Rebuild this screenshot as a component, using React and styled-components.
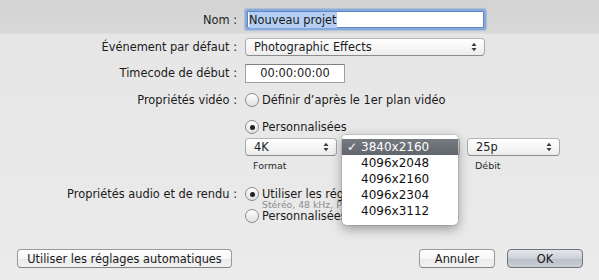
import React from "react";
import styled, { createGlobalStyle, css } from "styled-components";

const Global = createGlobalStyle`
  html, body { margin: 0; padding: 0; }
  body { width: 599px; height: 280px; overflow: hidden; background: #ebebeb; }
`;

const Window = styled.div`
  width: 599px;
  height: 280px;
  box-sizing: border-box;
  padding-top: 8px;
  display: flex;
  flex-direction: column;
  background: linear-gradient(#d3d3d3 0px, #d9d9d9 33px, #e6e6e6 34px, #ebebeb 280px);
  font-family: "DejaVu Sans", "Noto Sans", sans-serif;
  font-size: 11.4px;
  color: #1a1a1a;
`;

const Row = styled.div`
  display: grid;
  grid-template-columns: 237px 1fr;
  column-gap: 8px;
  align-items: ${(p) => p.$align || "center"};
  height: ${(p) => p.$h}px;
  margin-top: ${(p) => p.$mt || 0}px;
`;

const Label = styled.div`
  text-align: right;
  white-space: nowrap;
  line-height: 14px;
`;

const TextField = styled.div`
  box-sizing: border-box;
  width: ${(p) => p.$w}px;
  height: ${(p) => p.$h}px;
  background: #fff;
  border: 1px solid #a0a0a0;
  border-top-color: #808080;
  display: flex;
  align-items: center;
  justify-content: ${(p) => (p.$center ? "center" : "flex-start")};
  padding: 0 1px;
  white-space: nowrap;
  ${(p) =>
    p.$focus &&
    css`
      margin-left: 2px;
      border-color: #5f86c2;
      border-radius: 1px;
      box-shadow: 0 0 0 2px #86a9db, 0 0 1px 3px rgba(100, 145, 210, 0.35);
    `}
`;

const Selection = styled.span`
  background: #b4cff3;
  padding: 1px 0;
`;

const Popup = styled.div`
  box-sizing: border-box;
  width: ${(p) => p.$w}px;
  height: 18px;
  display: flex;
  align-items: center;
  padding: 0 7px 0 8px;
  border: 1px solid #a8a8a8;
  border-top-color: #b5b5b5;
  border-bottom-color: #8c8c8c;
  border-radius: 4px;
  background: linear-gradient(#ffffff, #f6f6f6 55%, #ececec);
  white-space: nowrap;
`;

const PopupText = styled.span`
  flex: 1;
  overflow: hidden;
`;

const Arrows = () => (
  <svg width="6" height="10" viewBox="0 0 6 10">
    <path d="M0.5 4 L3 0.8 L5.5 4 Z" fill="#3a3a3a" />
    <path d="M0.5 6 L3 9.2 L5.5 6 Z" fill="#3a3a3a" />
  </svg>
);

const Radio = styled.label`
  display: flex;
  align-items: center;
  gap: 3px;
  height: 14px;
  white-space: nowrap;
`;

const RadioCircle = styled.span`
  box-sizing: border-box;
  width: 14px;
  height: 14px;
  flex: none;
  border-radius: 50%;
  border: 1px solid #8a8a8a;
  background: linear-gradient(#ffffff, #ececec 60%, #e2e2e2);
  display: inline-flex;
  align-items: center;
  justify-content: center;
  &::after {
    content: "";
    width: 5px;
    height: 5px;
    border-radius: 50%;
    background: #222;
    display: ${(p) => (p.$checked ? "block" : "none")};
  }
`;

const PopupRow = styled.div`
  display: grid;
  grid-template-columns: 92px 116px 93px;
  column-gap: 7px;
  align-items: center;
`;

const Anchor = styled.div`
  position: relative;
`;

const SmallLabel = styled.div`
  font-size: 9.5px;
  color: #2a2a2a;
  padding-left: 8px;
`;

const Menu = styled.div`
  position: absolute;
  left: -2px;
  top: -3px;
  width: 116px;
  z-index: 10;
  box-sizing: border-box;
  padding: 4px 0 6px;
  background: rgba(255, 255, 255, 0.98);
  border-radius: 4px 4px 5px 5px;
  box-shadow: 0 0 0 1px rgba(0, 0, 0, 0.1), 0 4px 12px rgba(0, 0, 0, 0.35);
  font-size: 12px;
  color: #111;
`;

const MenuItem = styled.div`
  display: grid;
  grid-template-columns: 14px 1fr;
  align-items: center;
  height: 16px;
  padding-left: 5px;
  ${(p) =>
    p.$selected &&
    css`
      background: linear-gradient(#767a81, #61666d);
      color: #fff;
    `}
`;

const Stack = styled.div`
  display: flex;
  flex-direction: column;
  width: 97px;
  overflow: hidden;
`;

const Hint = styled.div`
  height: 8px;
  line-height: 8px;
  font-size: 9.3px;
  color: #8c8c8c;
  padding-left: 17px;
  white-space: nowrap;
`;

const Footer = styled.div`
  display: flex;
  justify-content: space-between;
  align-items: center;
  margin-top: 26px;
  padding: 0 16px 0 17px;
`;

const ButtonGroup = styled.div`
  display: flex;
  gap: 12px;
`;

const Button = styled.div`
  box-sizing: border-box;
  width: ${(p) => p.$w}px;
  height: 19px;
  display: flex;
  align-items: center;
  justify-content: center;
  border-radius: 4px;
  border: 1px solid #999;
  border-bottom-color: #838383;
  background: linear-gradient(#ffffff, #f7f7f7 50%, #ebebeb 51%, #f2f2f2);
  white-space: nowrap;
  ${(p) =>
    p.$default &&
    css`
      border-color: #6f747b;
      background: linear-gradient(#e4e7eb, #ccd1d8 50%, #b8bfc8 51%, #c9cfd6);
    `}
`;

const sizes = ["3840x2160", "4096x2048", "4096x2160", "4096x2304", "4096x3112"];

export default function App() {
  return (
    <>
      <Global />
      <Window>
        <Row $h={23}>
          <Label>Nom&nbsp;:</Label>
          <TextField $w={237} $h={17} $focus>
            <Selection>Nouveau projet</Selection>
          </TextField>
        </Row>
        <Row $h={19} $mt={6}>
          <Label>Événement par défaut&nbsp;:</Label>
          <Popup $w={240}>
            <PopupText>Photographic Effects</PopupText>
            <Arrows />
          </Popup>
        </Row>
        <Row $h={20} $mt={7}>
          <Label>Timecode de début&nbsp;:</Label>
          <TextField $w={100} $h={19} $center>
            00:00:00:00
          </TextField>
        </Row>
        <Row $h={16} $mt={9}>
          <Label>Propriétés vidéo&nbsp;:</Label>
          <Radio>
            <RadioCircle />
            Définir d’après le 1er plan vidéo
          </Radio>
        </Row>
        <Row $h={16} $mt={11}>
          <span />
          <Radio>
            <RadioCircle $checked />
            Personnalisées
          </Radio>
        </Row>
        <Row $h={18} $mt={3}>
          <span />
          <PopupRow>
            <Popup $w={92}>
              <PopupText>4K</PopupText>
              <Arrows />
            </Popup>
            <Anchor>
              <Popup $w={116}>
                <PopupText />
                <Arrows />
              </Popup>
              <Menu>
                {sizes.map((s, i) => (
                  <MenuItem key={s} $selected={i === 0}>
                    <span>{i === 0 ? "✓" : ""}</span>
                    <span>{s}</span>
                  </MenuItem>
                ))}
              </Menu>
            </Anchor>
            <Popup $w={93}>
              <PopupText>25p</PopupText>
              <Arrows />
            </Popup>
          </PopupRow>
        </Row>
        <Row $h={18}>
          <span />
          <PopupRow>
            <SmallLabel>Format</SmallLabel>
            <SmallLabel />
            <SmallLabel>Débit</SmallLabel>
          </PopupRow>
        </Row>
        <Row $h={36} $mt={13} $align="start">
          <Label>Propriétés audio et de rendu&nbsp;:</Label>
          <Stack>
            <Radio>
              <RadioCircle $checked />
              Utiliser les réglages par défaut
            </Radio>
            <Hint>Stéréo, 48 kHz, ProRes 422</Hint>
            <Radio>
              <RadioCircle />
              Personnalisées
            </Radio>
          </Stack>
        </Row>
        <Footer>
          <Button $w={215}>Utiliser les réglages automatiques</Button>
          <ButtonGroup>
            <Button $w={76}>Annuler</Button>
            <Button $w={76} $default>
              OK
            </Button>
          </ButtonGroup>
        </Footer>
      </Window>
    </>
  );
}
